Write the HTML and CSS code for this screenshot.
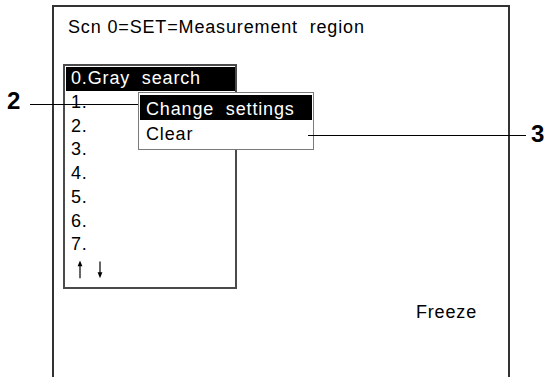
FILE: index.html
```html
<!DOCTYPE html>
<html>
<head>
<meta charset="utf-8">
<link rel="stylesheet" href="styles.css">
</head>
<body>
<div class="page">
  <div class="screen">
    <div class="title">Scn 0=SET=Measurement  region</div>
    <div class="list">
      <div class="row sel">0.Gray  search</div>
      <div class="row">1.</div>
      <div class="row">2.</div>
      <div class="row">3.</div>
      <div class="row">4.</div>
      <div class="row">5.</div>
      <div class="row">6.</div>
      <div class="row">7.</div>
      <div class="arrows"><svg width="40" height="23" viewBox="0 0 40 23"><line x1="9" y1="8" x2="9" y2="21.3" stroke="#000" stroke-width="1.2"/><polygon points="9,3.6 6.6,9.2 11.4,9.2" fill="#000"/><line x1="29" y1="4.6" x2="29" y2="16" stroke="#000" stroke-width="1.2"/><polygon points="29,21.3 26.6,15.2 31.4,15.2" fill="#000"/></svg></div>
    </div>
    <div class="status">Freeze</div>
  </div>
  <div class="popup">
    <div class="prow sel">Change  settings</div>
    <div class="prow">Clear</div>
  </div>
  <div class="num n2">2</div>
  <div class="lead l2"></div>
  <div class="num n3">3</div>
  <div class="lead l3"></div>
</div>
</body>
</html>
```
FILE: styles.css
```css
html, body {
  margin: 0;
  padding: 0;
  background: #fff;
}
.page {
  position: relative;
  width: 544px;
  height: 377px;
  overflow: hidden;
  padding-top: 5px;
  box-sizing: border-box;
  font-family: "Liberation Sans", Arial, sans-serif;
  font-size: 18px;
  color: #000;
}
.screen {
  margin-left: 52px;
  width: 458px;
  height: 390px;
  box-sizing: border-box;
  border: 2px solid #333;
  border-bottom: none;
}
.title {
  padding: 9px 0 0 14px;
  line-height: 22px;
  letter-spacing: 0.85px;
  white-space: pre;
}
.list {
  margin: 26px 0 0 9px;
  width: 174px;
  box-sizing: border-box;
  border: 2px solid #4a4a4a;
  padding: 1px 0 6px 1px;
}
.row {
  height: 23.75px;
  line-height: 23.75px;
  padding-left: 5px;
  letter-spacing: 0.85px;
  white-space: pre;
}
.row.sel,
.prow.sel {
  background: #000;
  color: #fff;
}
.arrows {
  height: 23.75px;
  padding-left: 5px;
}
.arrows svg {
  display: block;
}
.status {
  margin-top: 12px;
  line-height: 22px;
  text-align: right;
  padding-right: 31px;
  letter-spacing: 0.85px;
}
.popup {
  position: absolute;
  left: 138px;
  top: 92px;
  width: 176px;
  box-sizing: border-box;
  border: 1px solid #7a7a7a;
  background: #fff;
  padding: 2px 1px 4px 1px;
}
.prow {
  height: 25px;
  box-sizing: border-box;
  padding: 4px 0 0 6px;
  line-height: 21px;
  letter-spacing: 0.85px;
  white-space: pre;
}
.num {
  position: absolute;
  font-size: 24px;
  font-weight: bold;
  line-height: 24px;
}
.n2 {
  left: 7px;
  top: 89px;
}
.n3 {
  left: 531px;
  top: 122px;
}
.lead {
  position: absolute;
  height: 1px;
  background: #000;
}
.l2 {
  left: 30px;
  top: 104px;
  width: 108px;
}
.l3 {
  left: 308px;
  top: 135px;
  width: 218px;
}
```
